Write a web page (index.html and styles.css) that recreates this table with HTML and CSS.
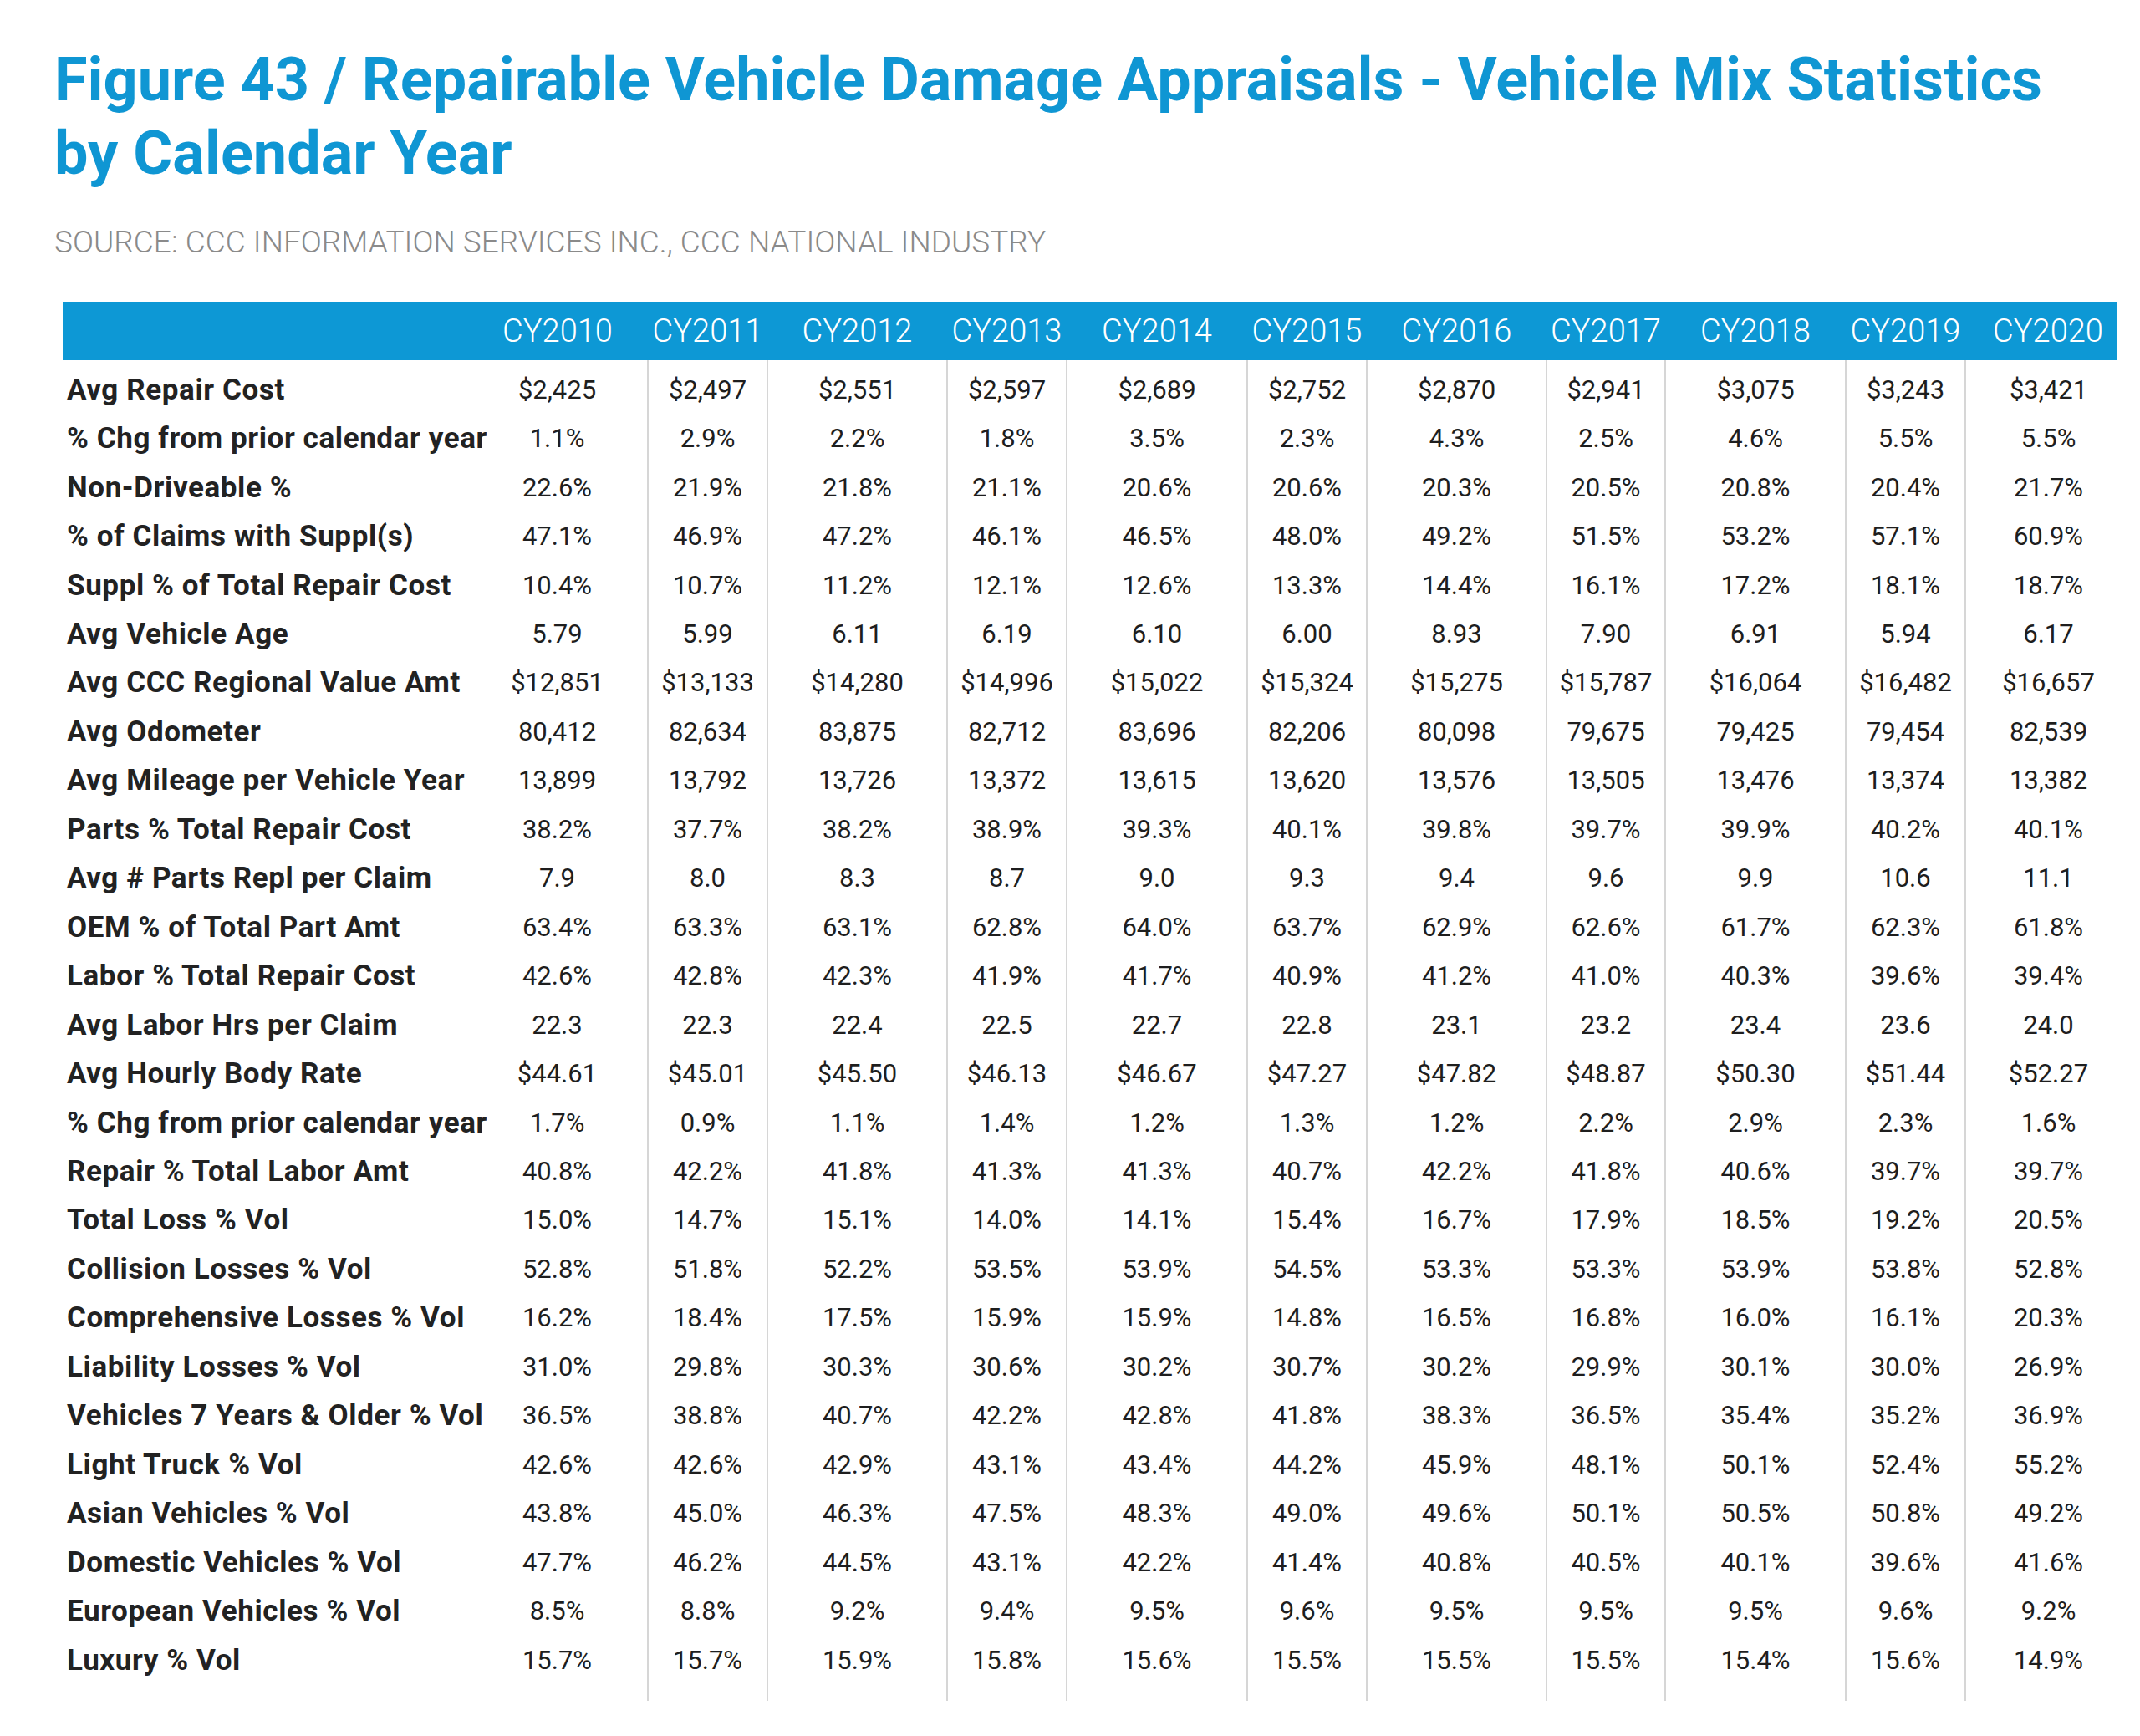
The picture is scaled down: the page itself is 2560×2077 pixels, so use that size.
FILE: index.html
```html
<!DOCTYPE html>
<html lang="en">
<head>
<meta charset="utf-8">
<title>Figure 43</title>
<link rel="stylesheet" href="styles.css">
</head>
<body>
<div class="page">
  <h1 class="title">Figure 43 / Repairable Vehicle Damage Appraisals - Vehicle Mix Statistics<br>by Calendar Year</h1>
  <p class="source">SOURCE: CCC INFORMATION SERVICES INC., CCC NATIONAL INDUSTRY</p>
  <table class="stats">
    <colgroup>
      <col class="c-label"><col class="c-wide"><col class="c-narrow"><col class="c-wide2"><col class="c-narrow"><col class="c-wide"><col class="c-narrow"><col class="c-wide2"><col class="c-narrow2"><col class="c-wide"><col class="c-narrow"><col class="c-last">
    </colgroup>
    <thead>
      <tr><th class="lbl"></th><th>CY2010</th><th class="odd">CY2011</th><th>CY2012</th><th class="odd">CY2013</th><th>CY2014</th><th class="odd">CY2015</th><th>CY2016</th><th class="odd">CY2017</th><th>CY2018</th><th class="odd">CY2019</th><th class="last">CY2020</th></tr>
    </thead>
    <tbody>
      <tr class="spacer-top"><td></td><td></td><td class="odd"></td><td></td><td class="odd"></td><td></td><td class="odd"></td><td></td><td class="odd"></td><td></td><td class="odd"></td><td></td></tr>
      <tr><td class="lbl">Avg Repair Cost</td><td>$2,425</td><td class="odd">$2,497</td><td>$2,551</td><td class="odd">$2,597</td><td>$2,689</td><td class="odd">$2,752</td><td>$2,870</td><td class="odd">$2,941</td><td>$3,075</td><td class="odd">$3,243</td><td class="last">$3,421</td></tr>
      <tr><td class="lbl">% Chg from prior calendar year</td><td>1.1%</td><td class="odd">2.9%</td><td>2.2%</td><td class="odd">1.8%</td><td>3.5%</td><td class="odd">2.3%</td><td>4.3%</td><td class="odd">2.5%</td><td>4.6%</td><td class="odd">5.5%</td><td class="last">5.5%</td></tr>
      <tr><td class="lbl">Non-Driveable %</td><td>22.6%</td><td class="odd">21.9%</td><td>21.8%</td><td class="odd">21.1%</td><td>20.6%</td><td class="odd">20.6%</td><td>20.3%</td><td class="odd">20.5%</td><td>20.8%</td><td class="odd">20.4%</td><td class="last">21.7%</td></tr>
      <tr><td class="lbl">% of Claims with Suppl(s)</td><td>47.1%</td><td class="odd">46.9%</td><td>47.2%</td><td class="odd">46.1%</td><td>46.5%</td><td class="odd">48.0%</td><td>49.2%</td><td class="odd">51.5%</td><td>53.2%</td><td class="odd">57.1%</td><td class="last">60.9%</td></tr>
      <tr><td class="lbl">Suppl % of Total Repair Cost</td><td>10.4%</td><td class="odd">10.7%</td><td>11.2%</td><td class="odd">12.1%</td><td>12.6%</td><td class="odd">13.3%</td><td>14.4%</td><td class="odd">16.1%</td><td>17.2%</td><td class="odd">18.1%</td><td class="last">18.7%</td></tr>
      <tr><td class="lbl">Avg Vehicle Age</td><td>5.79</td><td class="odd">5.99</td><td>6.11</td><td class="odd">6.19</td><td>6.10</td><td class="odd">6.00</td><td>8.93</td><td class="odd">7.90</td><td>6.91</td><td class="odd">5.94</td><td class="last">6.17</td></tr>
      <tr><td class="lbl">Avg CCC Regional Value Amt</td><td>$12,851</td><td class="odd">$13,133</td><td>$14,280</td><td class="odd">$14,996</td><td>$15,022</td><td class="odd">$15,324</td><td>$15,275</td><td class="odd">$15,787</td><td>$16,064</td><td class="odd">$16,482</td><td class="last">$16,657</td></tr>
      <tr><td class="lbl">Avg Odometer</td><td>80,412</td><td class="odd">82,634</td><td>83,875</td><td class="odd">82,712</td><td>83,696</td><td class="odd">82,206</td><td>80,098</td><td class="odd">79,675</td><td>79,425</td><td class="odd">79,454</td><td class="last">82,539</td></tr>
      <tr><td class="lbl">Avg Mileage per Vehicle Year</td><td>13,899</td><td class="odd">13,792</td><td>13,726</td><td class="odd">13,372</td><td>13,615</td><td class="odd">13,620</td><td>13,576</td><td class="odd">13,505</td><td>13,476</td><td class="odd">13,374</td><td class="last">13,382</td></tr>
      <tr><td class="lbl">Parts % Total Repair Cost</td><td>38.2%</td><td class="odd">37.7%</td><td>38.2%</td><td class="odd">38.9%</td><td>39.3%</td><td class="odd">40.1%</td><td>39.8%</td><td class="odd">39.7%</td><td>39.9%</td><td class="odd">40.2%</td><td class="last">40.1%</td></tr>
      <tr><td class="lbl">Avg # Parts Repl per Claim</td><td>7.9</td><td class="odd">8.0</td><td>8.3</td><td class="odd">8.7</td><td>9.0</td><td class="odd">9.3</td><td>9.4</td><td class="odd">9.6</td><td>9.9</td><td class="odd">10.6</td><td class="last">11.1</td></tr>
      <tr><td class="lbl">OEM % of Total Part Amt</td><td>63.4%</td><td class="odd">63.3%</td><td>63.1%</td><td class="odd">62.8%</td><td>64.0%</td><td class="odd">63.7%</td><td>62.9%</td><td class="odd">62.6%</td><td>61.7%</td><td class="odd">62.3%</td><td class="last">61.8%</td></tr>
      <tr><td class="lbl">Labor % Total Repair Cost</td><td>42.6%</td><td class="odd">42.8%</td><td>42.3%</td><td class="odd">41.9%</td><td>41.7%</td><td class="odd">40.9%</td><td>41.2%</td><td class="odd">41.0%</td><td>40.3%</td><td class="odd">39.6%</td><td class="last">39.4%</td></tr>
      <tr><td class="lbl">Avg Labor Hrs per Claim</td><td>22.3</td><td class="odd">22.3</td><td>22.4</td><td class="odd">22.5</td><td>22.7</td><td class="odd">22.8</td><td>23.1</td><td class="odd">23.2</td><td>23.4</td><td class="odd">23.6</td><td class="last">24.0</td></tr>
      <tr><td class="lbl">Avg Hourly Body Rate</td><td>$44.61</td><td class="odd">$45.01</td><td>$45.50</td><td class="odd">$46.13</td><td>$46.67</td><td class="odd">$47.27</td><td>$47.82</td><td class="odd">$48.87</td><td>$50.30</td><td class="odd">$51.44</td><td class="last">$52.27</td></tr>
      <tr><td class="lbl">% Chg from prior calendar year</td><td>1.7%</td><td class="odd">0.9%</td><td>1.1%</td><td class="odd">1.4%</td><td>1.2%</td><td class="odd">1.3%</td><td>1.2%</td><td class="odd">2.2%</td><td>2.9%</td><td class="odd">2.3%</td><td class="last">1.6%</td></tr>
      <tr><td class="lbl">Repair % Total Labor Amt</td><td>40.8%</td><td class="odd">42.2%</td><td>41.8%</td><td class="odd">41.3%</td><td>41.3%</td><td class="odd">40.7%</td><td>42.2%</td><td class="odd">41.8%</td><td>40.6%</td><td class="odd">39.7%</td><td class="last">39.7%</td></tr>
      <tr><td class="lbl">Total Loss % Vol</td><td>15.0%</td><td class="odd">14.7%</td><td>15.1%</td><td class="odd">14.0%</td><td>14.1%</td><td class="odd">15.4%</td><td>16.7%</td><td class="odd">17.9%</td><td>18.5%</td><td class="odd">19.2%</td><td class="last">20.5%</td></tr>
      <tr><td class="lbl">Collision Losses % Vol</td><td>52.8%</td><td class="odd">51.8%</td><td>52.2%</td><td class="odd">53.5%</td><td>53.9%</td><td class="odd">54.5%</td><td>53.3%</td><td class="odd">53.3%</td><td>53.9%</td><td class="odd">53.8%</td><td class="last">52.8%</td></tr>
      <tr><td class="lbl">Comprehensive Losses % Vol</td><td>16.2%</td><td class="odd">18.4%</td><td>17.5%</td><td class="odd">15.9%</td><td>15.9%</td><td class="odd">14.8%</td><td>16.5%</td><td class="odd">16.8%</td><td>16.0%</td><td class="odd">16.1%</td><td class="last">20.3%</td></tr>
      <tr><td class="lbl">Liability Losses % Vol</td><td>31.0%</td><td class="odd">29.8%</td><td>30.3%</td><td class="odd">30.6%</td><td>30.2%</td><td class="odd">30.7%</td><td>30.2%</td><td class="odd">29.9%</td><td>30.1%</td><td class="odd">30.0%</td><td class="last">26.9%</td></tr>
      <tr><td class="lbl">Vehicles 7 Years &amp; Older % Vol</td><td>36.5%</td><td class="odd">38.8%</td><td>40.7%</td><td class="odd">42.2%</td><td>42.8%</td><td class="odd">41.8%</td><td>38.3%</td><td class="odd">36.5%</td><td>35.4%</td><td class="odd">35.2%</td><td class="last">36.9%</td></tr>
      <tr><td class="lbl">Light Truck % Vol</td><td>42.6%</td><td class="odd">42.6%</td><td>42.9%</td><td class="odd">43.1%</td><td>43.4%</td><td class="odd">44.2%</td><td>45.9%</td><td class="odd">48.1%</td><td>50.1%</td><td class="odd">52.4%</td><td class="last">55.2%</td></tr>
      <tr><td class="lbl">Asian Vehicles % Vol</td><td>43.8%</td><td class="odd">45.0%</td><td>46.3%</td><td class="odd">47.5%</td><td>48.3%</td><td class="odd">49.0%</td><td>49.6%</td><td class="odd">50.1%</td><td>50.5%</td><td class="odd">50.8%</td><td class="last">49.2%</td></tr>
      <tr><td class="lbl">Domestic Vehicles % Vol</td><td>47.7%</td><td class="odd">46.2%</td><td>44.5%</td><td class="odd">43.1%</td><td>42.2%</td><td class="odd">41.4%</td><td>40.8%</td><td class="odd">40.5%</td><td>40.1%</td><td class="odd">39.6%</td><td class="last">41.6%</td></tr>
      <tr><td class="lbl">European Vehicles % Vol</td><td>8.5%</td><td class="odd">8.8%</td><td>9.2%</td><td class="odd">9.4%</td><td>9.5%</td><td class="odd">9.6%</td><td>9.5%</td><td class="odd">9.5%</td><td>9.5%</td><td class="odd">9.6%</td><td class="last">9.2%</td></tr>
      <tr><td class="lbl">Luxury % Vol</td><td>15.7%</td><td class="odd">15.7%</td><td>15.9%</td><td class="odd">15.8%</td><td>15.6%</td><td class="odd">15.5%</td><td>15.5%</td><td class="odd">15.5%</td><td>15.4%</td><td class="odd">15.6%</td><td class="last">14.9%</td></tr>
      <tr class="spacer-bottom"><td></td><td></td><td class="odd"></td><td></td><td class="odd"></td><td></td><td class="odd"></td><td></td><td class="odd"></td><td></td><td class="odd"></td><td></td></tr>
    </tbody>
  </table>
</div>
</body>
</html>
```

FILE: styles.css
```css
html, body {
  margin: 0;
  padding: 0;
  background: #ffffff;
}

.page {
  width: 2560px;
  height: 2077px;
  box-sizing: border-box;
  padding: 52px 0 0 0;
  font-family: Roboto, "Liberation Sans", sans-serif;
  color: #222222;
}

.title {
  margin: 0 0 0 65px;
  font-family: Roboto, "Liberation Sans", sans-serif;
  font-weight: 700;
  font-size: 72px;
  line-height: 88px;
  color: #0f96d3;
  letter-spacing: 0;
}

.source {
  margin: 42px 0 0 65px;
  font-family: Roboto, "Liberation Sans", sans-serif;
  font-weight: 300;
  font-size: 37px;
  line-height: 40px;
  color: #8a8a8a;
}

.stats {
  margin: 51px 0 0 75px;
  border-collapse: collapse;
  table-layout: fixed;
  width: 2458px;
}

.c-label { width: 484px; }
.c-wide { width: 216px; }
.c-wide2 { width: 215px; }
.c-narrow { width: 143px; }
.c-narrow2 { width: 142px; }
.c-last { width: 182px; }

.stats th {
  background: #0d98d5;
  color: #ffffff;
  font-weight: 300;
  font-size: 38px;
  height: 70px;
  padding: 0;
  text-align: center;
  vertical-align: middle;
  white-space: nowrap;
}

.stats th.last {
  padding-left: 16px;
}

.stats td {
  padding: 0;
  height: 58.46px;
  font-size: 31px;
  font-weight: 400;
  color: #1e1e1e;
  text-align: center;
  vertical-align: middle;
  white-space: nowrap;
}

.stats td.last {
  padding-left: 16px;
}

.stats td.odd {
  border-left: 2px solid #d6d6d6;
  border-right: 2px solid #d6d6d6;
}

.stats td.lbl {
  text-align: left;
  padding-left: 5px;
  font-size: 35px;
  font-weight: 700;
  letter-spacing: 0.6px;
  color: #222222;
}

.stats tr.spacer-top td {
  height: 6px;
}

.stats tr.spacer-bottom td {
  height: 20px;
}
```
